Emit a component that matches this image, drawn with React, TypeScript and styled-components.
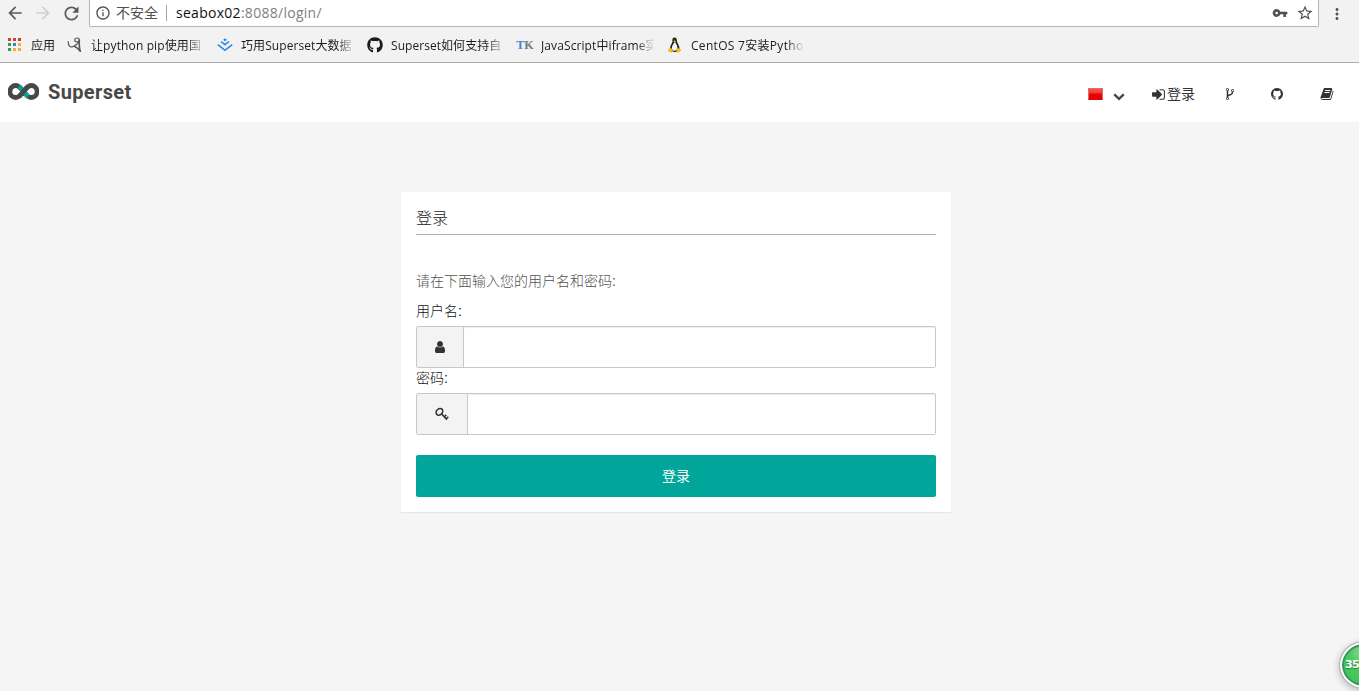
import React from "react";
import styled, { createGlobalStyle } from "styled-components";
import { MdArrowBack, MdArrowForward, MdRefresh, MdInfoOutline, MdStarBorder, MdMoreVert, MdVpnKey } from "react-icons/md";
import { FaGithub } from "react-icons/fa";

const GlobalStyle = createGlobalStyle`
  * { box-sizing: border-box; }
  body {
    margin: 0;
    background: #f5f5f5;
    overflow: hidden;
    font-family: "Liberation Sans", "Noto Sans CJK SC", sans-serif;
    color: #333;
  }
`;

const Page = styled.div`
  height: 691px;
  display: flex;
  flex-direction: column;
`;

const BrowserChrome = styled.header`
  height: 63px;
  flex: none;
  background: #f2f2f2;
  border-bottom: 1px solid #adadad;
  font-family: "Open Sans", "Noto Sans CJK SC", sans-serif;
`;

const Toolbar = styled.div`
  display: flex;
  height: 27px;
  padding-left: 5px;
`;

const ToolButton = styled.span<{ $disabled?: boolean }>`
  display: flex;
  align-items: center;
  justify-content: center;
  width: 28px;
  height: 26px;
  padding-right: 8px;
  color: ${(p) => (p.$disabled ? "#d0d0d0" : "#5a5a5a")};
  svg { flex: none; }
`;

const AddressBar = styled.div`
  display: flex;
  align-items: center;
  width: 1230px;
  height: 27px;
  padding: 0 4px 1px 5px;
  background: #fff;
  border: 1px solid #b4b4b4;
  border-top: 0;
  border-radius: 0 0 2px 2px;
  color: #505050;
`;

const Security = styled.span`
  margin-left: 5px;
  padding-right: 8px;
  border-right: 1px solid #a5a5a5;
  font-size: 14px;
  line-height: 16px;
`;

const Url = styled.span`
  flex: 1;
  margin-left: 9px;
  font: 14px/20px "Open Sans", sans-serif;
  letter-spacing: 0.28px;
  color: #808080;
  b { font-weight: 400; color: #111; }
`;

const AddressIcons = styled.span`
  display: flex;
  align-items: center;
  gap: 8px;
`;

const MenuButton = styled.span`
  display: flex;
  align-items: center;
  margin-left: 9px;
  height: 27px;
  color: #555;
`;

const Bookmarks = styled.nav`
  display: flex;
  height: 35px;
  padding-left: 7px;
`;

const Bookmark = styled.a<{ $width: number }>`
  display: flex;
  align-items: center;
  width: ${(p) => p.$width}px;
  color: #1c1c1c;
`;

const BookmarkIcon = styled.span`
  display: flex;
  align-items: center;
  justify-content: center;
  flex: none;
  width: 16px;
  height: 16px;
`;

const BookmarkLabel = styled.span<{ $fade?: boolean; $spacing?: number }>`
  width: 114px;
  margin-left: 8px;
  padding-top: 2px;
  white-space: nowrap;
  font-size: 12px;
  line-height: 20px;
  letter-spacing: ${(p) => p.$spacing ?? 0}px;
  ${(p) => p.$fade && "mask-image: linear-gradient(to right, #000 84%, transparent 100%);"}
`;

const TkMark = styled.span`
  font: bold 12px/16px "Liberation Serif", serif;
  color: #697c87;
  b { color: #3c86dc; }
`;

const Navbar = styled.nav`
  display: flex;
  justify-content: space-between;
  flex: none;
  height: 59px;
  padding: 0 25px 0 8px;
  background: #fff;
`;

const Brand = styled.a`
  display: flex;
  align-items: center;
  height: 56px;
  color: #484848;
  font: bold 20px/24px Roboto, sans-serif;
  letter-spacing: 0.35px;
`;

const BrandName = styled.span`
  margin: 2px 0 0 9px;
`;

const NavLinks = styled.div`
  display: flex;
  align-items: center;
  height: 62px;
`;

const NavItem = styled.a<{ $width: number }>`
  display: flex;
  align-items: center;
  width: ${(p) => p.$width}px;
  color: #333;
  font-size: 14px;
  line-height: 20px;
`;

const Flag = styled.span`
  width: 15px;
  height: 12px;
  margin: 0 10px 0 1px;
  border: 1px solid #e36b60;
  border-bottom-color: #b91212;
  background: linear-gradient(#f0564c 0, #ed3c35 40%, #f10000 50%, #e40000 100%);
`;

const Caret = styled.span`
  display: flex;
  padding-top: 4px;
  color: #484848;
`;

const LinkText = styled.span`
  margin-left: 1px;
`;

const Main = styled.main`
  display: flex;
  justify-content: center;
  align-items: flex-start;
  flex: 1;
  padding: 70px 7px 0 0;
`;

const Panel = styled.form`
  width: 550px;
  height: 320px;
  padding: 15px;
  background: #fff;
  box-shadow: 0 1px 1px rgba(0, 0, 0, 0.06);
`;

const PanelTitle = styled.h1`
  height: 28px;
  margin: 0 0 36px;
  border-bottom: 1px solid #b3b3b3;
  color: #222;
  font-size: 16px;
  font-weight: 300;
  line-height: 23px;
`;

const Hint = styled.p`
  margin: 0 0 10px;
  color: #505050;
  font-size: 14px;
  font-weight: 300;
  line-height: 20px;
`;

const Label = styled.label`
  display: block;
  height: 20px;
  color: #151515;
  font-size: 14px;
  line-height: 20px;
  font-weight: 300;
`;

const InputGroup = styled.div`
  display: flex;
  height: 42px;
  margin: 5px 0 0;
  border: 1px solid #c8c8c8;
  border-radius: 2px;
  overflow: hidden;
`;

const Addon = styled.span<{ $width: number }>`
  display: flex;
  align-items: center;
  justify-content: center;
  width: ${(p) => p.$width}px;
  background: #f3f3f3;
  border-right: 1px solid #c8c8c8;
  color: #333;
`;

const Input = styled.input`
  flex: 1;
  border: 0;
  outline: 0;
  background: #fff;
  box-shadow: inset 0 1px 1px rgba(0, 0, 0, 0.075);
`;

const Submit = styled.button`
  display: block;
  width: 100%;
  height: 42px;
  margin-top: 20px;
  padding: 0;
  border: 0;
  border-radius: 2px;
  background: #00a699;
  color: #fff;
  font: 14px/20px "Liberation Sans", "Noto Sans CJK SC", sans-serif;
`;

const FloatingBadge = styled.div`
  position: absolute;
  left: 1340px;
  top: 642px;
  width: 48px;
  height: 46px;
  padding: 14px 0 0 3px;
  border: 2px solid #fff;
  border-radius: 50%;
  outline: 1px solid #b0b0b0;
  background: radial-gradient(circle at 50% 20%, #8de08b 0, #4fc963 35%, #3fc558 75%);
  box-shadow: inset 0 0 0 2px #359665, 0 2px 6px 2px rgba(0, 0, 0, 0.2);
  color: #fff;
  font: bold 11px/14px "DejaVu Sans", sans-serif;
  text-shadow: 0 1px 1px #267b38;
  letter-spacing: -0.7px;
`;

const ClippedCorner = styled.aside`
  position: absolute;
  inset: 0;
  overflow: hidden;
  pointer-events: none;
`;

const glyphs = {
  user: "M1536 1399q0 109-62.5 187t-150.5 78h-854q-88 0-150.5-78t-62.5-187q0-85 8.5-160.5t31.5-152 58.5-131 94-89 134.5-34.5q131 128 313 128t313-128q76 0 134.5 34.5t94 89 58.5 131 31.5 152 8.5 160.5zm-256-887q0 159-112.5 271.5t-271.5 112.5-271.5-112.5-112.5-271.5 112.5-271.5 271.5-112.5 271.5 112.5 112.5 271.5z",
  signIn: "M1312 896q0 26-19 45l-544 544q-19 19-45 19t-45-19-19-45v-288h-448q-26 0-45-19t-19-45v-384q0-26 19-45t45-19h448v-288q0-26 19-45t45-19 45 19l544 544q19 19 19 45zm352-352v704q0 119-84.5 203.5t-203.5 84.5h-320q-13 0-22.5-9.5t-9.5-22.5q0-4-1-20t-.5-26.5 3-23.5 10-19.5 20.5-6.5h320q66 0 113-47t47-113v-704q0-66-47-113t-113-47h-312l-11.5-1-11.5-3-8-5.5-7-9-2-13.5q0-4-1-20t-.5-26.5 3-23.5 10-19.5 20.5-6.5h320q119 0 203.5 84.5t84.5 203.5z",
  fork: "M672 1472q0-40-28-68t-68-28-68 28-28 68 28 68 68 28 68-28 28-68zm0-1152q0-40-28-68t-68-28-68 28-28 68 28 68 68 28 68-28 28-68zm640 128q0-40-28-68t-68-28-68 28-28 68 28 68 68 28 68-28 28-68zm96 0q0 52-26 96.5t-70 69.5q-2 287-226 414-67 38-203 81-128 40-169.5 71t-41.5 100v26q44 25 70 69.5t26 96.5q0 80-56 136t-136 56-136-56-56-136q0-52 26-96.5t70-69.5v-820q-44-25-70-69.5t-26-96.5q0-80 56-136t136-56 136 56 56 136q0 52-26 96.5t-70 69.5v497q54-26 154-57 55-17 87.5-29.5t70.5-31 59-39.5 40.5-51 28-69.5 8.5-91.5q-44-25-70-69.5t-26-96.5q0-80 56-136t136-56 136 56 56 136z",
  github: "M896 128q209 0 385.5 103t279.5 279.5 103 385.5q0 251-146.5 451.5t-378.5 277.5q-27 5-40-7t-13-30q0-3 .5-76.5t.5-134.5q0-97-52-142 57-6 102.5-18t94-39 81-66.5 53-105 20.5-150.5q0-119-79-206 37-91-8-204-28-9-81 11t-92 44l-38 24q-93-26-192-26t-192 26q-16-11-42.5-27t-83.5-38.5-85-13.5q-45 113-8 204-79 87-79 206 0 85 20.5 150t52.5 105 80.5 67 94 39 102.5 18q-39 36-49 103-21 10-45 15t-57 5-65.5-21.5-55.5-62.5q-19-32-48.5-52t-49.5-24l-20-3q-21 0-29 4.5t-5 11.5 9 14 13 12l7 5q22 10 43.5 38t31.5 51l10 23q13 38 44 61.5t67 30 69.5 7 55.5-3.5l23-4q0 38 .5 88.5t.5 54.5q0 18-13 30t-40 7q-232-77-378.5-277.5t-146.5-451.5q0-209 103-385.5t279.5-279.5 385.5-103z",
  book: "M1703 478q40 57 18 129l-275 906q-19 64-76.5 107.5t-122.5 43.5h-923q-77 0-148.5-53.5t-99.5-131.5q-24-67-2-127 0-4 3-27t4-37q1-8-3-21.5t-3-19.5q2-11 8-21t16.5-23.5 16.5-23.5q23-38 45-91.5t30-91.5q3-10 .5-30t-.5-28q3-11 17-28t17-23q21-36 42-92t25-90q1-9-2.5-32t.5-28q4-13 22-30.5t22-22.5q19-26 42.5-84.5t27.5-96.5q1-8-3-25.5t-2-26.5q2-8 9-18t18-23 17-21q8-12 16.5-30.5t15-35 16-36 19.5-32 26.5-23.5 36-11.5 47.5 5.5l-1 3q38-9 51-9h761q74 0 114 56t18 130l-274 906q-36 119-71.5 153.5t-128.5 34.5h-869q-27 0-38 15-11 16-1 43 24 70 144 70h923q29 0 56-15.5t35-41.5l300-987q7-22 5-57 38 15 59 43zm-1064 2q-4 13 2 22.5t20 9.5h608q13 0 25.5-9.5t16.5-22.5l21-64q4-13-2-22.5t-20-9.5h-608q-13 0-25.5 9.5t-16.5 22.5zm-83 256q-4 13 2 22.5t20 9.5h608q13 0 25.5-9.5t16.5-22.5l21-64q4-13-2-22.5t-20-9.5h-608q-13 0-25.5 9.5t-16.5 22.5z",
  chevron: "M1683 808l-742 741q-19 19-45 19t-45-19l-742-741q-19-19-19-45.5t19-45.5l166-165q19-19 45-19t45 19l531 531 531-531q19-19 45-19t45 19l166 165q19 19 19 45.5t-19 45.5z",
};

const Glyph = ({ name, size = 14 }: { name: keyof typeof glyphs; size?: number }) => (
  <svg width={size} height={size} viewBox="0 0 1792 1792" fill="currentColor"><path d={glyphs[name]} /></svg>
);

const KeyGlyph = () => (
  <svg width="14" height="14" viewBox="0 0 14 14" fill="none" stroke="currentColor">
    <ellipse cx="4.4" cy="4.8" rx="3.7" ry="2.9" transform="rotate(-45 4.4 4.8)" strokeWidth="1.6" />
    <path d="M6.6 7 12 12.6M9.4 9.8l1.9-1.9M11.3 11.8l2-2" strokeWidth="1.6" />
  </svg>
);

const AppsGlyph = () => {
  const colors = ["#d93b2b", "#d93b2b", "#d93b2b", "#2f9c5c", "#3b7fe0", "#eeb22c", "#2f9c5c", "#eeb22c", "#eeb22c"];
  return (
    <svg width="16" height="16" viewBox="0 0 16 16">
      {colors.map((c, i) => <rect key={i} x={1 + (i % 3) * 5} y={1 + Math.floor(i / 3) * 5} width="3" height="3" fill={c} />)}
    </svg>
  );
};

const ScriptGlyph = () => (
  <svg width="16" height="16" viewBox="0 0 16 16" fill="none" stroke="#555" strokeLinecap="round">
    <path d="M1.200 4.500C1 9 3.500 10.800 6 9.500 9 8.200 12.600 5.500 12.300 2.600 12 .2 7.800.6 7.600 3c-.1 2.200 3.500 2.400 4.500.7" strokeWidth="1.2" />
    <path d="M12.300 3c-.2 4-.1 8 1 11.300M7.500 9.500c2 .5 4 2.300 5.600 4.600" strokeWidth="1.6" />
  </svg>
);

const JuejinGlyph = () => (
  <svg width="16" height="16" viewBox="0 0 16 16" fill="none" stroke="#2687e8" strokeWidth="1.6">
    <path d="M8 1.2 9.8 2.7 8 4.2 6.2 2.7Z" fill="#2687e8" stroke="none" />
    <path d="M4 4.5l4 3.2 4-3.2M.8 7.6 8 13.3l7.2-5.7" />
  </svg>
);

const PenguinGlyph = () => (
  <svg width="16" height="16" viewBox="0 0 16 16">
    <path d="M7.500.5c-2 0-2.300 1.700-2.100 3.700.1 2-2.500 4-2.500 7.100 0 2.400 2 3.700 4.700 3.700s4.900-1 4.900-3.700c0-3-2.300-4.800-2.500-7C9.900 2.100 9.600.5 7.500.5Z" fill="#292929" />
    <path d="M7.400 5.600C6.500 7 4.700 9 4.900 11.200c.2 1.600 1 2.500 2.600 2.500s2.900-.8 2.900-2.900c0-2-1.300-3.600-2-5.200Z" fill="#f6f6f6" />
    <path d="M6 4.300 7.600 3.500 9.200 4.300 7.600 5.600ZM1.300 12l2.400-1.500 2.900 4-1.800 1.300-3.500-1.300ZM9.800 11.300l2.700.3 2.200 1.600-3.600 2.600-1.800-1Z" fill="#edbd25" />
  </svg>
);

const InfinityLogo = () => (
  <svg width="31" height="17" viewBox="0 0.500 32 17" preserveAspectRatio="none" fill="none" strokeWidth="4.800">
    <path d="M16 9C13 5.500 11.200 3 8 3a6 6 0 0 0 0 12c3.200 0 5-2.500 8-6s4.800-6 8-6a6 6 0 0 1 0 12c-3.200 0-5-2.500-8-6Z" stroke="#484848" />
    <path d="M11.300 3.800C13 5.200 14.500 7.200 16 9s3 3.800 4.700 5.200" stroke="#00a699" />
    <path d="M11.300 14.200C13 12.800 14.500 10.800 16 9s3-3.800 4.700-5.200" stroke="#484848" />
  </svg>
);

export default function App() {
  return (
    <Page>
      <GlobalStyle />
      <BrowserChrome>
        <Toolbar>
          <ToolButton><MdArrowBack size={20} /></ToolButton>
          <ToolButton $disabled><MdArrowForward size={20} /></ToolButton>
          <ToolButton><MdRefresh size={21} /></ToolButton>
          <AddressBar>
            <MdInfoOutline size={16} />
            <Security>不安全</Security>
            <Url><b>seabox02</b>:8088/login/</Url>
            <AddressIcons><MdVpnKey size={16} /><MdStarBorder size={18} /></AddressIcons>
          </AddressBar>
          <MenuButton><MdMoreVert size={18} /></MenuButton>
        </Toolbar>
        <Bookmarks>
          <Bookmark $width={60}><BookmarkIcon><AppsGlyph /></BookmarkIcon><BookmarkLabel>应用</BookmarkLabel></Bookmark>
          <Bookmark $width={150}><BookmarkIcon><ScriptGlyph /></BookmarkIcon><BookmarkLabel $fade $spacing={0.12}>让python pip使用国</BookmarkLabel></Bookmark>
          <Bookmark $width={150}><BookmarkIcon><JuejinGlyph /></BookmarkIcon><BookmarkLabel $fade $spacing={0.08}>巧用Superset大数据</BookmarkLabel></Bookmark>
          <Bookmark $width={150}><BookmarkIcon><FaGithub size={16} /></BookmarkIcon><BookmarkLabel $fade $spacing={0.05}>Superset如何支持自</BookmarkLabel></Bookmark>
          <Bookmark $width={150}><BookmarkIcon><TkMark><b>T</b>K</TkMark></BookmarkIcon><BookmarkLabel $fade $spacing={0.1}>JavaScript中iframe实</BookmarkLabel></Bookmark>
          <Bookmark $width={150}><BookmarkIcon><PenguinGlyph /></BookmarkIcon><BookmarkLabel $fade $spacing={0.3}>CentOS 7安装Pytho</BookmarkLabel></Bookmark>
        </Bookmarks>
      </BrowserChrome>
      <Navbar>
        <Brand><InfinityLogo /><BrandName>Superset</BrandName></Brand>
        <NavLinks>
          <NavItem $width={64}><Flag /><Caret><Glyph name="chevron" size={12} /></Caret></NavItem>
          <NavItem $width={72}><Glyph name="signIn" size={15} /><LinkText>登录</LinkText></NavItem>
          <NavItem $width={47}><Glyph name="fork" /></NavItem>
          <NavItem $width={50}><Glyph name="github" /></NavItem>
          <NavItem $width={14}><Glyph name="book" /></NavItem>
        </NavLinks>
      </Navbar>
      <Main>
        <Panel>
          <PanelTitle>登录</PanelTitle>
          <Hint>请在下面输入您的用户名和密码:</Hint>
          <Label htmlFor="username">用户名:</Label>
          <InputGroup><Addon $width={47}><Glyph name="user" /></Addon><Input id="username" /></InputGroup>
          <Label htmlFor="password">密码:</Label>
          <InputGroup><Addon $width={51}><KeyGlyph /></Addon><Input id="password" type="password" /></InputGroup>
          <Submit type="button">登录</Submit>
        </Panel>
      </Main>
      <ClippedCorner><FloatingBadge>35</FloatingBadge></ClippedCorner>
    </Page>
  );
}
